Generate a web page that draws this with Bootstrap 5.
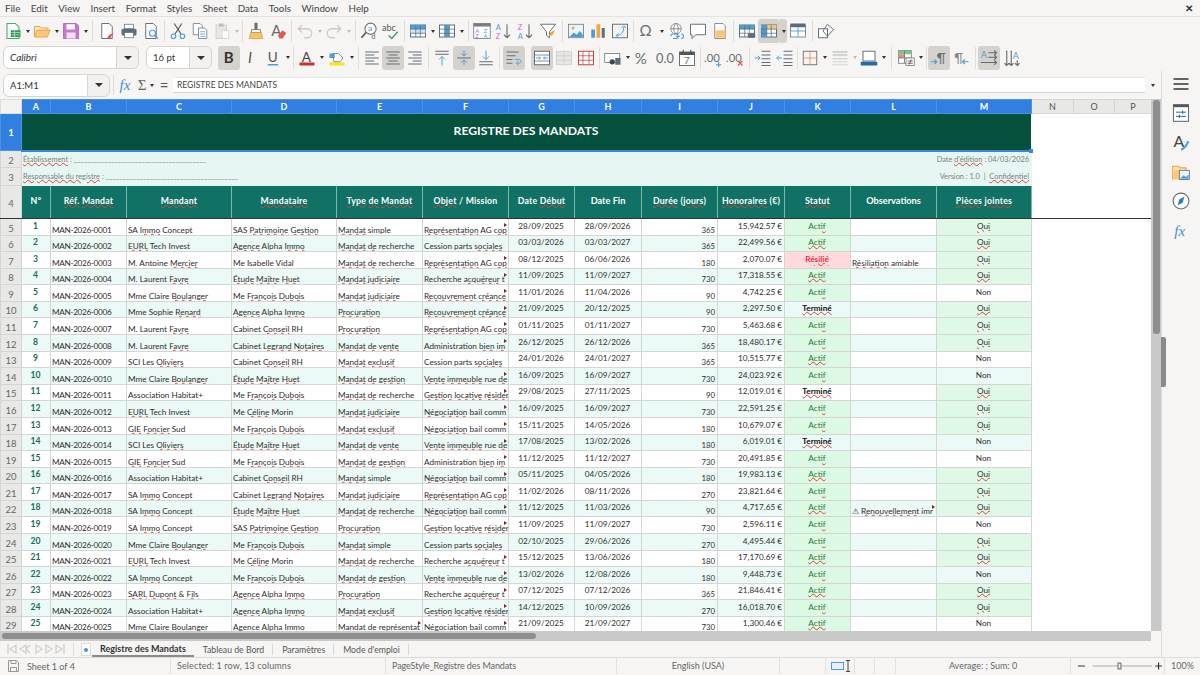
<!DOCTYPE html>
<html lang="fr">
<head>
<meta charset="UTF-8">
<title>Registre des Mandats</title>
<link href="https://cdn.jsdelivr.net/npm/bootstrap@5.3.0/dist/css/bootstrap.min.css" rel="stylesheet">
<style>
html, body { height: 675px; overflow: hidden; }
body { background: #f6f5f4; color: #3d3d3d; font-family: "Lato", "Noto Sans", sans-serif; font-size: 10px; }

/* menu + toolbars */
.menubar { height: 17px; border-bottom: 1px solid #e4e2df; font-size: 9.8px; padding-left: 5px; gap: 10.5px; line-height: 16px; color: #444; }
.menu-close { font-size: 10px; font-weight: 700; width: 22px; text-align: center; color: #333; }
.tbar { height: 27px; }
.tbar-a { padding-left: 2px; padding-top: 1px; }
.tbar-b { padding-left: 3px; }
.tbtn { width: 22px; height: 24px; padding: 0; border: 0; border-radius: 3px; flex: none; display: flex; align-items: center; justify-content: center; }
.tbtn svg { width: 18px; height: 18px; display: block; }
.tbtn.on { background: #d5d2ce; }
.tcar { width: 7px; height: 24px; flex: none; display: flex; align-items: center; justify-content: center; }
.tcar::after { content: ""; border-left: 2.5px solid transparent; border-right: 2.5px solid transparent; border-top: 3px solid #333; }
.tcar.off::after { border-top-color: #bbb; }
.tcar.on { background: #d5d2ce; border-radius: 0 3px 3px 0; }
.tsep { flex: none; display: flex; justify-content: center; }
.tsep::after { content: ""; width: 1px; height: 22px; background: #e0dedb; }
.combo { height: 23px; flex-wrap: nowrap; flex: none; }
.combo .form-control { font-size: 9.5px; padding: 0 6px; line-height: 21px; min-height: 0; height: 23px; border-color: #d8d5d1; color: #333; }
.combo .btn { background: #f2f1ef; border: 1px solid #d8d5d1; padding: 0; width: 23px; display: flex; align-items: center; justify-content: center; }
.combo .btn::after { content: ""; border-left: 4px solid transparent; border-right: 4px solid transparent; border-top: 4px solid #333; }
.combo-font { width: 136px; margin-right: 7px; font-style: italic; }
.combo-font .form-control { font-size: 10px; }
.combo-size { width: 66px; margin-right: 6px; }
.combo-name { width: 107px; }

/* formula bar */
.fbar { height: 28px; padding-left: 3px; }
.fsep { width: 1px; height: 20px; background: #dedcd9; margin: 0 0 0 3px; flex: none; }
.finput { width: 972px; height: 16px; background: #fff; border-bottom: 1px solid #d4d2cf; border-top: 1px solid #e8e6e3; font-size: 8.5px; line-height: 14px; padding-left: 4px; color: #444; flex: none; }
.fx-glyph { font-family: "Liberation Serif", serif; font-style: italic; color: #3f8fd0; font-size: 15px; width: 22px; text-align: center; line-height: 20px; flex: none; }
.sum-glyph { font-family: "Liberation Serif", serif; color: #666; font-size: 15px; width: 12px; text-align: center; line-height: 20px; flex: none; }
.eq-glyph { font-size: 15px; color: #555; width: 18px; text-align: center; line-height: 20px; flex: none; }

/* sheet */
.workarea { height: 586px; }
.leftcol { width: 1162px; flex: none; border-right: 1px solid #dedcd9; }
.sheet-row { height: 532px; }
.sheet-wrap { width: 1151px; height: 532px; overflow: hidden; background: #fff; flex: none; }
.table.sheet { width: 1151px; table-layout: fixed; border-collapse: collapse; margin: 0; font-size: 8.2px; line-height: 10px; --bs-table-border-color: #d3d6d5; --bs-table-bg: #fff; }
.table.sheet td, .table.sheet th { padding: 0 2px 0 1px; white-space: nowrap; overflow: hidden; position: relative; color: #2e2e2e; border: 1px solid var(--bs-table-border-color); font-weight: 400; }
.hr-cols { height: 14px; }
.hr-title { height: 37px; }
.hr-info { height: 17px; }
.hr-info2 { height: 18px; }
.hr-head { height: 33px; }
.table.sheet .hc { background: #e8e8e6; color: #555; text-align: center; font-size: 9px; border-color: #d5d5d3; padding: 0; vertical-align: middle; }
.table.sheet .hc.sel { background: #317fe0; color: #fff; font-weight: 700; border-color: #4f90e2; }
.table.sheet .corner { background: #f3f3f1; border-color: #ddd; }
.table.sheet .rh { background: #e8e8e6; color: #666; text-align: center; font-size: 9.5px; vertical-align: middle; padding: 3px 0 0; border-color: #d5d5d3; }
.table.sheet .rh.sel { background: #317fe0; color: #fff; font-weight: 700; border-color: #4f90e2; padding-top: 1px; }
.table.sheet .blank { border-color: #fff; background: #fff; }
.table.sheet td.title { background: #05513e; color: #fff; font-size: 12.2px; font-weight: 700; text-align: center; vertical-align: middle; border: 1px solid #fff; border-bottom: 2px solid #3d85dc; overflow: visible; padding-bottom: 1px; }
.handle { position: absolute; right: -2px; bottom: -3px; width: 4px; height: 4px; background: #3d85dc; z-index: 2; }
.table.sheet td.info { background: #e6f7f3; color: #7b7f7e; font-size: 7.4px; vertical-align: middle; border-color: #e6f7f3; padding-top: 1px; }
.table.sheet th.ch { background: #0f7265; font-size: 8.7px; font-weight: 700; letter-spacing: .25px; text-align: center; vertical-align: middle; border: 1px solid #7fb6ae; padding: 0 0 2px; color: #fff; border-bottom: 0; }
.table.sheet th.big { font-size: 9.2px; letter-spacing: 0; }
.table.sheet tr.head-row td, .table.sheet tr.head-row th { border-bottom: 1.5px solid #333; }
.table.sheet tr.tint td.cell { background: #ebfaf6; }
.table.sheet td.low { vertical-align: bottom; padding-bottom: 0; }
.table.sheet td.mid { vertical-align: middle; padding-bottom: 3px; text-align: center; }
.table.sheet td.ref { letter-spacing: -.32px; }
.table.sheet td.num { color: #1a6b5d; font-weight: 700; font-size: 8.6px; }
.table.sheet td.dur { text-align: right; font-size: 7.8px; }
.table.sheet td.fee { text-align: right; }
.table.sheet td.st-on, .table.sheet tr.tint td.st-on { background: #dcf9e3; color: #1e7a3e; }
.table.sheet td.st-bad, .table.sheet tr.tint td.st-bad { background: #ffd9dc; color: #e0333c; font-weight: 700; }
.table.sheet td.st-end { color: #111; font-weight: 700; }
.table.sheet td.yes, .table.sheet tr.tint td.yes { background: #dff9e6; }
.sp { text-decoration: underline wavy #e2403c; text-decoration-thickness: 1px; text-underline-offset: 0; }
.more::after { content: ""; position: absolute; right: 1px; top: 4px; border-left: 3px solid #8a2020; border-top: 2px solid transparent; border-bottom: 2px solid transparent; }

/* scrollbars */
.vscroll { width: 10px; background: #c9c9c9; flex: none; position: relative; }
.vthumb { position: absolute; left: 2px; right: 1px; top: 1px; height: 234px; background: #8e8e8e; border-radius: 3px; }
.hscroll { height: 10px; width: 1151px; background: #c9c9c9; position: relative; }
.hthumb { position: absolute; left: 2px; top: 2px; height: 6px; width: 534px; background: #8e8e8e; border-radius: 3px; }
.grip { position: absolute; left: 1161px; top: 266px; width: 5px; height: 50px; background: #8a8a8a; border-radius: 0 2px 2px 0; z-index: 3; }

/* tabs and status */
.tabbar { height: 16px; font-size: 9px; line-height: 14px; color: #555; }
.tabnav { width: 73px; flex: none; padding-left: 6px; }
.tabnav svg { width: 60px; height: 12px; display: block; }
.tabnew { width: 19px; flex: none; border-left: 1px solid #ddd; display: flex; justify-content: center; padding-left: 5px; }
.sheet-tab { padding: 0 8px; position: relative; flex: none; }
.sheet-tab.active { font-weight: 700; color: #333; border-bottom: 2px solid #8a8a8a; height: 15px; }
.sheet-tab.plain { border-right: 1px solid #d8d6d3; height: 11px; line-height: 11px; margin: 1px 0 0 9px; padding: 0 8px 0 0; font-size: 8.7px; }
.statusbar { height: 17px; border-top: 1px solid #dedcd9; font-size: 9px; color: #666; line-height: 15px; }
.stat { height: 16px; border-right: 1px solid #e3e1de; flex: none; white-space: nowrap; }
.stat-a { width: 171px; }
.stat-b { width: 215px; letter-spacing: .12px; padding-left: 6px; }
.stat-c { width: 231px; letter-spacing: -.1px; padding-left: 6px; }
.stat-d { width: 163px; }
.stat-e { width: 46px; }
.stat-f { width: 29px; }
.stat-g { width: 20px; }
.stat-h { width: 21px; }
.stat-i { width: 175px; }
.stat-j { width: 94px; }
.sidebar { width: 38px; flex: none; margin-top: -2px; }
.side-ico { width: 22px; height: 29.4px; display: flex; align-items: center; justify-content: center; }
.side-ico svg { width: 20px; height: 20px; }
</style>
</head>
<body>
<div class="d-flex menubar" id="menu"></div>
<div class="d-flex align-items-center tbar tbar-a" id="tb1"></div>
<div class="d-flex align-items-center tbar tbar-b" id="tb2"></div>

<div class="d-flex workarea">
  <div class="leftcol d-flex flex-column position-relative">
    <div class="d-flex align-items-center fbar">
      <div class="input-group combo combo-name">
        <div class="form-control">A1:M1</div>
        <button class="btn" type="button" aria-label="Zone"></button>
      </div>
      <div class="fsep"></div>
      <div class="fx-glyph">fx</div>
      <div class="sum-glyph">Σ</div>
      <div class="tcar"></div>
      <div class="eq-glyph">=</div>
      <div class="finput">REGISTRE DES MANDATS</div>
      <div class="tcar ms-1"></div>
    </div>
    <div class="d-flex sheet-row">
      <div class="sheet-wrap">
        <table class="table table-bordered sheet">
          <colgroup id="cols"></colgroup>
          <tbody id="grid"></tbody>
        </table>
      </div>
      <div class="vscroll"><div class="vthumb"></div></div>
    </div>
    <div class="grip"></div>
    <div class="hscroll"><div class="hthumb"></div></div>
    <div class="d-flex align-items-center tabbar">
      <div class="tabnav">
        <svg viewBox="0 0 60 12" fill="none" stroke="#d4d2cf" stroke-width="1.4"><path d="M2 1v10M10 2L4 6l6 4zM20 2l-6 4 6 4zM24 2l-4 4 4 4M30 2l6 4-6 4zM40 2l6 4-6 4zM50 2l6 4-6 4zM58 1v10"/></svg>
      </div>
      <div class="tabnew"><svg width="10" height="13" viewBox="0 0 10 13"><rect x=".5" y=".5" width="9" height="12" fill="#fff" stroke="#ddd"/><circle cx="5" cy="7" r="2" fill="#4b8fd6"/></svg></div>
      <div class="sheet-tab active">Registre des Mandats</div>
      <div class="sheet-tab plain">Tableau de Bord</div>
      <div class="sheet-tab plain">Paramètres</div>
      <div class="sheet-tab plain">Mode d'emploi</div>
    </div>
  </div>
  <div class="sidebar d-flex flex-column align-items-center" id="side"></div>
</div>

<div class="d-flex statusbar">
  <div class="stat stat-a d-flex align-items-center"><svg class="ms-2 me-2" width="11" height="12" viewBox="0 0 11 12" fill="none" stroke="#999"><path d="M.5.5h8l2 2v9H.5z"/><path d="M2.5 7.5h6v4h-6zM3 .5v3h5v-3"/></svg>Sheet 1 of 4</div>
  <div class="stat stat-b">Selected: 1 row, 13 columns</div>
  <div class="stat stat-c">PageStyle_Registre des Mandats</div>
  <div class="stat stat-d text-center">English (USA)</div>
  <div class="stat stat-e"></div>
  <div class="stat stat-f d-flex align-items-center"><svg width="26" height="14" viewBox="0 0 26 14" fill="none"><rect x="5.500" y="3.500" width="12" height="7" fill="#e8f1fa" stroke="#4b9fd6"/><path d="M20 1.500h4M22 1.500v11M20 12.500h4" stroke="#444"/></svg></div>
  <div class="stat stat-g"></div>
  <div class="stat stat-h"></div>
  <div class="stat stat-i text-center">Average: ; Sum: 0</div>
  <div class="stat stat-j d-flex align-items-center"><svg width="94" height="14" viewBox="0 0 94 14" fill="none" stroke="#666"><path d="M7 7h7M85 7h7M88.500 3.500v7" stroke="#333" stroke-width="1.200"/><path d="M22 7h60" stroke="#aaa"/><rect x="47.500" y="4" width="3" height="6" fill="#eee" stroke="#666"/></svg></div>
  <div class="flex-grow-1 text-center">100%</div>
</div>

<script>
// colours used over and over in the icons
const G = '#666e73', B = '#4b9fd6', L = '#c9c9c9';
const line = (d, c = G, w = 1.5) => `<path d="${d}" fill="none" stroke="${c}" stroke-width="${w}"/>`;
const doc = (c = G) => `<path d="M5 2h10l4 4v16H5z" fill="#fff" stroke="${c}" stroke-width="1.300"/>`;
const txt = (x, y, s, t, c = G, extra = '') => `<text x="${x}" y="${y}" font-size="${s}" fill="${c}" font-family="Lato, sans-serif" ${extra}>${t}</text>`;
const table = (stroke, head, extra = '') => `<rect x="2" y="4" width="20" height="16" fill="#fff" stroke="${stroke}" stroke-width="1.300"/>${head}${line('M2 9.500h20M2 15h20M9 4v16M15 4v16', stroke, 1)}${extra}`;
const lines = (arr, c = G) => line(arr.map(a => `M${a[0]} ${a[2]}H${a[1]}`).join(''), c, 1.400);

const ICONS = {
  new: `<path d="M4 2h11l5 5v15H4z" fill="#fff" stroke="#49a56e" stroke-width="1.400"/><rect x="9" y="11" width="13" height="9" fill="#2f9a5b"/>${line('M10 14h11M10 17h11M14 11v9', '#bfe6cc', 1)}`,
  open: `<path d="M2 20V6h7l2 2h9v3" fill="#fde3b8" stroke="#e5a64a" stroke-width="1.300"/><path d="M2 20l3-9h18l-4 9z" fill="#fbc878" stroke="#e5a64a" stroke-width="1.300"/>`,
  save: `<path d="M2 2h17l3 3v17H2z" fill="#c678cf" stroke="#a957b3"/><rect x="6" y="3" width="11" height="7" fill="#fff"/><rect x="6" y="14" width="12" height="8" fill="#f3dff5"/>`,
  pdf: `${doc()}<path d="M12 22c2-5 5-7 9-6-3 1-4 3-4 6z" fill="#e2574c"/>`,
  print: `<rect x="6" y="3" width="12" height="6" fill="#fff" stroke="${G}"/><rect x="2" y="9" width="20" height="9" rx="2" fill="#5f6d78"/><rect x="6" y="14" width="12" height="7" fill="#fff" stroke="${G}"/>`,
  preview: `${doc()}<circle cx="14" cy="15" r="4" fill="#fff" stroke="${B}" stroke-width="1.600"/>${line('M17 18l4 4', B, 2)}`,
  cut: `${line('M7 2l9 14M17 2L8 16', '#555', 1.500)}<circle cx="6" cy="19" r="3" fill="none" stroke="${B}" stroke-width="1.500"/><circle cx="18" cy="19" r="3" fill="none" stroke="${B}" stroke-width="1.500"/>`,
  copy: `<path d="M3 2h9l3 3v12H3z" fill="#fff" stroke="${G}"/><path d="M10 8h8l3 3v11H10z" fill="#fff" stroke="${G}"/>${line('M12 13h7M12 16h7M12 19h7', B, 1)}`,
  paste: `<rect x="4" y="4" width="14" height="18" fill="#e7e6e4" stroke="${L}"/><rect x="8" y="2" width="6" height="4" fill="#bbb"/><path d="M12 11h9v11h-9z" fill="#fff" stroke="${L}"/>`,
  clone: `<rect x="10" y="1" width="4" height="9" fill="#77695a"/><path d="M6 10h12v4H6z" fill="#fff" stroke="${G}"/><path d="M5 14h14l2 8H3z" fill="#f3c56b" stroke="#d1962e"/>`,
  clear: `${txt(3, 18, 20, 'A')}<path d="M12 18l6-7 5 4-5 7h-4z" fill="#e2574c"/>`,
  undo: line('M8 4L3 9l5 5M3 9h12a6 6 0 0 1 0 12h-4', L, 1.700),
  redo: line('M16 4l5 5-5 5M21 9H9a6 6 0 0 0 0 12h4', L, 1.700),
  find: `<circle cx="14" cy="9" r="7.500" fill="#fff" stroke="${G}" stroke-width="1.400"/>${txt(10.500, 12.500, 11, 'a', B)}${line('M8 14l-6 7', '#555', 2.200)}${txt(15, 23, 10, 'd')}`,
  spell: `${txt(0, 12, 12, 'abc', '#555')}${line('M9 18l4 4 8-9', '#3aa66a', 2)}`,
  rows: table('#5b6b7a', `<rect x="2" y="4" width="20" height="5.500" fill="${B}"/><rect x="2" y="9.500" width="20" height="5.500" fill="#cfe5f5"/>`),
  cols: table('#5b6b7a', `<rect x="9" y="4" width="6" height="16" fill="${B}"/>`),
  sortall: `<rect x="1" y="2" width="22" height="20" fill="#fff" stroke="${G}"/><rect x="1" y="2" width="22" height="4" fill="#7a7a7a"/>${txt(3, 14, 8, 'A', '#c668c9')}${txt(3, 21, 8, 'Z', '#c668c9')}${txt(14, 14, 8, 'Z', B)}${txt(14, 21, 8, 'A', B)}`,
  asc: `${txt(1, 11, 10, 'A', B)}${txt(1, 22, 10, 'Z', '#c668c9')}${line('M16 3v18M12 17l4 4 4-4')}`,
  desc: `${txt(1, 11, 10, 'Z', '#c668c9')}${txt(1, 22, 10, 'A', B)}${line('M16 3v18M12 17l4 4 4-4')}`,
  filter: `<path d="M2 3h20l-8 10v8l-4-3v-5z" fill="#fff" stroke="${G}" stroke-width="1.300"/><path d="M13 19c1-5 4-7 8-8-1 4-3 8-8 8z" fill="#f0a83c"/>`,
  image: `<rect x="2" y="3" width="20" height="18" fill="#eaf4fb" stroke="${G}"/><circle cx="8" cy="8" r="2" fill="#f0a83c"/><path d="M3 20l6-6 4 3 4-5 4 5v3z" fill="${B}"/>`,
  chart: `<rect x="3" y="10" width="5" height="11" fill="${B}"/><rect x="10" y="3" width="5" height="18" fill="#f0a83c"/><rect x="17" y="8" width="4" height="13" fill="#5f6d78"/>`,
  pivot: `<rect x="2" y="3" width="20" height="18" fill="#f3f3f1" stroke="${G}" stroke-width="1.300"/>${line('M7 18c6 0 10-4 10-11M14 8l3-3 3 3M10 15l-3 3 3 3', B, 1.300)}`,
  omega: txt(2, 19, 20, 'Ω'),
  link: `<circle cx="12" cy="9" r="7" fill="#fff" stroke="${G}"/>${line('M5 9h14M12 2c-4 4-4 10 0 14M12 2c4 4 4 10 0 14', G, 1)}${line('M5 19a3 3 0 0 1 3-3h4a3 3 0 0 1 0 6H8M12 19h5M19 16a3 3 0 0 1 0 6', B, 1.500)}`,
  comment: `<path d="M2 3h20v14H9l-5 5v-5H2z" fill="#fff" stroke="${G}" stroke-width="1.300"/>`,
  hdr: `<path d="M5 2h11l3 3v17H5z" fill="#fff" stroke="${G}"/><rect x="6" y="11" width="13" height="10" fill="#f6c67a"/>`,
  parea: `${table('#5b6b7a', `<rect x="2" y="4" width="20" height="5.500" fill="${B}"/>`)}<rect x="13" y="15" width="10" height="6" rx="2" fill="#5f6d78"/>`,
  freeze: `${table('#5b6b7a', `<rect x="2" y="4" width="20" height="5.500" fill="#f6c67a"/><rect x="2" y="4" width="7" height="16" fill="${B}"/>`)}`,
  split: `<rect x="2" y="4" width="20" height="16" fill="#fff" stroke="#5b6b7a"/><rect x="2" y="2" width="20" height="5" fill="#5b6b7a"/>${line('M2 12h20M12 7v13', B, 1.200)}`,
  shapes: `<rect x="2" y="9" width="12" height="12" fill="#fff" stroke="${G}" stroke-width="1.300"/><path d="M14 3l8 7-8 9-6-7z" fill="none" stroke="${G}" stroke-width="1.300"/>`,
  bold: txt(5, 19, 20, 'B', '#333', 'font-weight="700"'),
  italic: txt(8, 19, 20, 'I', '#555', 'font-style="italic" font-family="Liberation Serif"'),
  under: `${txt(5, 17, 18, 'U', '#555')}${line('M5 21h14', B, 2)}`,
  fcolor: `${txt(5, 17, 18, 'A', '#444')}<rect x="2" y="18" width="20" height="4" fill="#c9302c"/>`,
  hcolor: `<rect x="2" y="18" width="20" height="4" fill="#f4e81c"/><path d="M6 6h8l6 6-4 5H8z" fill="#fff" stroke="${G}"/><rect x="2" y="6" width="7" height="6" fill="${B}"/>`,
  alL: lines([[3,21,4],[3,15,8],[3,21,12],[3,15,16],[3,21,20]]),
  alC: lines([[3,21,4],[6,18,8],[3,21,12],[6,18,16],[3,21,20]]),
  alR: lines([[3,21,4],[9,21,8],[3,21,12],[9,21,16],[3,21,20]]),
  vT: `${lines([[3,21,3],[3,21,7]])}${line('M12 22V10M8 14l4-4 4 4', B, 1.300)}`,
  vC: `${lines([[3,21,12]])}${line('M12 2v7M8 6l4 3 4-3M12 22v-7M8 18l4-3 4 3', B, 1.300)}`,
  vB: `${lines([[3,21,17],[3,21,21]])}${line('M12 2v12M8 10l4 4 4-4', B, 1.300)}`,
  wrap: `${lines([[2,18,4],[2,14,9],[2,10,14],[2,10,19]])}${line('M13 14h6c3 0 3 5 0 5h-3M18 16l-3 3 3 3', B, 1.200)}`,
  merge: `<rect x="2" y="3" width="20" height="18" fill="#fff" stroke="#5b6b7a" stroke-width="1.300"/>${line('M2 8h20M2 16h20', '#5b6b7a', 1)}${line('M4 12h6M8 10l2 2-2 2M20 12h-6M16 10l-2 2 2 2', B, 1.300)}`,
  unmerge: `<rect x="2" y="3" width="20" height="18" fill="#e8e7e5" stroke="${L}"/>${line('M2 9h20M2 15h20M12 3v18', L, 1)}`,
  splitc: `<rect x="2" y="3" width="20" height="18" fill="#fff" stroke="#c9403c" stroke-width="1.300"/>${line('M2 9h20M2 15h20M8 3v18M16 3v18', '#c9403c', 1)}`,
  money: `<rect x="1" y="6" width="20" height="12" fill="#fff" stroke="${G}"/><circle cx="11" cy="17" r="3.500" fill="#444"/><rect x="15" y="12" width="7" height="9" fill="#5f6d78"/>`,
  percent: txt(1, 20, 20, '%'),
  number: txt(0, 19, 17, '0.0'),
  date: `<rect x="2" y="4" width="20" height="18" fill="#fff" stroke="${G}" stroke-width="1.300"/><rect x="2" y="4" width="20" height="4" fill="#555"/>${line('M7 1v5M17 1v5', '#555', 1.500)}${txt(8, 20, 13, '7')}`,
  adddec: `${txt(0, 17, 15, '.00')}${line('M16 21h7M19.500 17v7', B, 1.600)}`,
  deldec: `${txt(0, 17, 15, '.00')}${line('M16 16l6 6M22 16l-6 6', '#e2574c', 1.600)}`,
  indent: `${lines([[10,22,3],[10,22,8],[10,22,13],[10,22,18],[10,22,22]])}${line('M1 12h7M5 9l3 3-3 3', B, 1.300)}`,
  outdent: `${lines([[10,22,3],[10,22,8],[10,22,13],[10,22,18],[10,22,22]])}${line('M8 12H1M4 9l-3 3 3 3', B, 1.300)}`,
  borders: `<rect x="3" y="3" width="18" height="18" fill="none" stroke="${G}" stroke-width="1.200"/>${line('M3 12h18M12 3v18', '#d98a3c', 1)}`,
  bstyle: `${line('M2 4h20M2 8h20', L, 2)}${line('M2 13h20', L, 1.400)}${line('M2 17h20M2 21h20', L, 1)}`,
  bcolor: `<rect x="4" y="3" width="16" height="13" fill="#fff" stroke="${G}" stroke-width="1.300"/><rect x="1" y="17" width="22" height="5" fill="#2a69a8"/>`,
  cond: `<rect x="2" y="2" width="17" height="17" fill="#fff" stroke="${G}"/><rect x="2" y="2" width="17" height="5" fill="#7fc28e"/><rect x="2" y="7" width="8" height="5" fill="#e88d86"/>${line('M2 12h17M10 2v17', G, 1)}<rect x="12" y="12" width="11" height="10" fill="#fff" stroke="${G}"/>${line('M14 16h7M14 19h7M19 14l-3 7', '#444', 1)}`,
  ltr: `${txt(9, 18, 17, '¶')}${line('M1 17h8M6 14l3 3-3 3', B, 1.500)}`,
  rtl: `${txt(3, 18, 17, '¶', '#888')}${line('M22 17h-8M17 14l-3 3 3 3', B, 1.500)}`,
  horiz: `${txt(1, 12, 12, 'A', B)}${line('M11 5h11M19 2l3 3-3 3M11 11h11M19 8l3 3-3 3M1 18h21M19 15l3 3-3 3')}`,
  vert: `${txt(13, 13, 12, 'A', B)}${line('M5 2v20M2 19l3 3 3-3M11 2v20M8 19l3 3 3-3M19 15v7M16 19l3 3 3-3')}`,
  burger: line('M3 6h18M3 12h18M3 18h18', '#333', 2),
  props: `<rect x="3" y="2" width="18" height="20" fill="#fff" stroke="${G}" stroke-width="1.300"/><rect x="3" y="2" width="18" height="3" fill="#555"/>${line('M6 11h12M6 16h12M14 9v4M10 14v4', '#2a69a8', 1.200)}`,
  styles: `${txt(3, 18, 19, 'A', '#444')}${line('M12 21c3 0 5-2 9-10', B, 2.500)}`,
  gallery: `<path d="M2 21V5h7l2 2h7v3" fill="#fde3b8" stroke="#e5a64a" stroke-width="1.300"/><path d="M2 21l2-11h8v11z" fill="#fbc878"/><rect x="10" y="10" width="12" height="11" fill="#eaf4fb" stroke="${G}"/><path d="M11 20l4-4 3 2 3-3v5z" fill="${B}"/>`,
  nav: `<circle cx="12" cy="12" r="9.500" fill="#fff" stroke="${G}" stroke-width="1.300"/><path d="M16 7l-2 7-6 3 2-7z" fill="#2a7fc0"/>`,
  fx: `<text x="4" y="18" font-size="18" fill="#3f8fd0" font-family="Liberation Serif" font-style="italic">fx</text>`
};
const svg = n => `<svg viewBox="0 0 24 24" aria-hidden="true">${ICONS[n]}</svg>`;

// toolbar description: name, ^ caret, ^- dimmed caret, | separator:width, * pressed
function bar(id, spec) {
  const host = document.getElementById(id);
  spec.trim().split(/\s+/).forEach(tok => {
    if (tok.startsWith('|')) {
      host.insertAdjacentHTML('beforeend', `<div class="tsep" style="width:${tok.slice(1)}px"></div>`);
    } else if (tok === '^' || tok === '^-' || tok === '^*') {
      host.insertAdjacentHTML('beforeend', `<div class="tcar ${tok === '^-' ? 'off' : tok === '^*' ? 'on' : ''}"></div>`);
    } else if (tok.startsWith('_')) {
      host.insertAdjacentHTML('beforeend', `<div class="flex-none" style="margin-left:${tok.slice(1)}px"></div>`);
    } else {
      const on = tok.endsWith('*');
      host.insertAdjacentHTML('beforeend', `<button type="button" class="btn tbtn ${on ? 'on' : ''}">${svg(tok.replace('*', ''))}</button>`);
    }
  });
}

document.getElementById('menu').innerHTML =
  ['File','Edit','View','Insert','Format','Styles','Sheet','Data','Tools','Window','Help'].map(m => `<span>${m}</span>`).join('') +
  '<span class="ms-auto menu-close">✕</span>';

bar('tb1', `new ^ open ^ save ^ |7 pdf print preview |5 cut copy paste ^- |5 clone clear |5 undo ^- redo ^- |6 find spell |5
  rows ^ cols ^ |6 sortall asc desc filter |6 image chart pivot |5 omega ^ link comment hdr |5 parea freeze* ^* split |6 shapes`);

document.getElementById('tb2').innerHTML = `
  <div class="input-group combo combo-font"><div class="form-control">Calibri</div><button class="btn" type="button" aria-label="Police"></button></div>
  <div class="input-group combo combo-size"><div class="form-control">16 pt</div><button class="btn" type="button" aria-label="Taille"></button></div>`;
bar('tb2', `bold* italic under ^ |5 fcolor ^ _1 hcolor ^ |6 alL _-1 alC* alR |5 vT vC* vB |5 _1 wrap* _6 merge* unmerge splitc |5 money ^ _1 percent number date |4
  adddec deldec |6 indent outdent |3 borders ^ _1 bstyle ^- bcolor ^ |8 cond ^ |4 ltr* rtl |6 horiz* _1 vert`);

document.getElementById('side').innerHTML = ['burger','props','styles','gallery','nav','fx'].map(n => `<div class="side-ico">${svg(n)}</div>`).join('');

// sheet data
const widths = [21,29,76,105,105,86,86,66,67,76,67,66,86,95,42,41,37];
document.getElementById('cols').innerHTML = widths.map(w => `<col style="width:${w}px">`).join('');

const SA='SA Immo Concept', EU='EURL Tech Invest', LF='M. Laurent Favre', MC='Mme Claire Boulanger', AH='Association Habitat+', SC='SCI Les Oliviers', GF='GIE Foncier Sud';
const AG='Agence Alpha Immo', FD='Me François Dubois', HU='Étude Maître Huet', CC='Cabinet Conseil RH', CL='Cabinet Legrand Notaires', CM='Me Céline Morin', PG='SAS Patrimoine Gestion';
const MR='Mandat de recherche', MJ='Mandat judiciaire', MS='Mandat simple', PR='Procuration', MV='Mandat de vente', MX='Mandat exclusif', MG='Mandat de gestion', MP='Mandat de représentat';
// long texts stop where the cell cuts them on screen
const RE='Représentation AG cop', CE='Cession parts sociales', RA='Recherche acquéreur t', RC='Recouvrement créance', AD='Administration bien im', VI='Vente immeuble rue de', GL='Gestion locative résider', NB='Négociation bail comm', WA='⚠ Renouvellement imr';
const rows = [
 [SA,PG,MS,RE,'28/09/2025','28/09/2026',365,'15,942.57','Actif','', 'Oui'],
 [EU,AG,MR,CE,'03/03/2026','03/03/2027',365,'22,499.56','Actif','', 'Oui'],
 ['M. Antoine Mercier','Me Isabelle Vidal',MR,RE,'08/12/2025','06/06/2026',180,'2,070.07','Résilié','Résiliation amiable','Oui'],
 [LF,HU,MJ,RA,'11/09/2025','11/09/2027',730,'17,318.55','Actif','', 'Oui'],
 [MC,FD,MJ,RC,'11/01/2026','11/04/2026',90,'4,742.25','Actif','', 'Non'],
 ['Mme Sophie Renard',AG,PR,RC,'21/09/2025','20/12/2025',90,'2,297.50','Terminé','', 'Oui'],
 [LF,CC,PR,RE,'01/11/2025','01/11/2027',730,'5,463.68','Actif','', 'Oui'],
 [LF,CL,MV,AD,'26/12/2025','26/12/2026',365,'18,480.17','Actif','', 'Oui'],
 [SC,CC,MX,CE,'24/01/2026','24/01/2027',365,'10,515.77','Actif','', 'Non'],
 [MC,HU,MG,VI,'16/09/2025','16/09/2027',730,'24,023.92','Actif','', 'Non'],
 [AH,FD,MR,GL,'29/08/2025','27/11/2025',90,'12,019.01','Terminé','', 'Oui'],
 [EU,CM,MJ,NB,'16/09/2025','16/09/2027',730,'22,591.25','Actif','', 'Oui'],
 [GF,FD,MX,NB,'15/11/2025','14/05/2026',180,'10,679.07','Actif','', 'Oui'],
 [SC,HU,MV,VI,'17/08/2025','13/02/2026',180,'6,019.01','Terminé','', 'Non'],
 [GF,FD,MG,AD,'11/12/2025','11/12/2027',730,'20,491.85','Actif','', 'Non'],
 [AH,CC,MS,NB,'05/11/2025','04/05/2026',180,'19,983.13','Actif','', 'Oui'],
 [SA,CL,MJ,RE,'11/02/2026','08/11/2026',270,'23,821.64','Actif','', 'Oui'],
 [SA,HU,MR,NB,'11/12/2025','11/03/2026',90,'4,717.65','Actif',WA,'Oui'],
 [SA,PG,PR,GL,'11/09/2025','11/09/2027',730,'2,596.11','Actif','', 'Non'],
 [MC,FD,MS,CE,'02/10/2025','29/06/2026',270,'4,495.44','Actif','', 'Oui'],
 [EU,CM,MR,RA,'15/12/2025','13/06/2026',180,'17,170.69','Actif','', 'Oui'],
 [SA,FD,MG,VI,'13/02/2026','12/08/2026',180,'9,448.73','Actif','', 'Non'],
 ['SARL Dupont & Fils',AG,PR,RA,'07/12/2025','07/12/2026',365,'21,846.41','Actif','', 'Oui'],
 [AH,AG,MX,GL,'14/12/2025','10/09/2026',270,'16,018.70','Actif','', 'Oui'],
 [MC,AG,MP,NB,'21/09/2025','21/09/2027',730,'1,300.46','Actif','', 'Non']
];

// words the spell checker flags in the reference
const FLAGGED = new Set(('Immo Patrimoine Gestion EURL Agence Mercier Favre Boulanger Renard Étude Maître Huet François Dubois Céline Conseil Legrand Notaires Oliviers GIE Foncier SARL Dupont Fils ' +
  'Mandat de vente gestion exclusif judiciaire Procuration représentat sociales Représentation cop acquéreur Recouvrement créance bien im Vente immeuble locative résider Négociation ' +
  'Actif Résilié Terminé Oui Résiliation Renouvellement Établissement Réf. Mandant Mandataire Type Objet Début Durée (jours) Honoraires Statut Pièces jointes').split(' '));
const esc = s => s.replace(/&/g, '&amp;');
const sp = s => esc(s).split(' ').map(w => FLAGGED.has(w) ? `<span class="sp">${w}</span>` : w).join(' ');

const letters = 'ABCDEFGHIJKLM'.split('');
let html = '<tr class="hr-cols"><th class="hc corner"></th>' +
  letters.map(l => `<th class="hc sel">${l}</th>`).join('') +
  ['N','O','P'].map(l => `<th class="hc">${l}</th>`).join('') + '</tr>';

const blanks = '<td class="blank"></td><td class="blank"></td><td class="blank"></td>';
const rule = '_'.repeat(39);
html += `<tr class="hr-title"><td class="rh sel">1</td><td class="title" colspan="13">REGISTRE DES MANDATS<span class="handle"></span></td>${blanks}</tr>`;
html += `<tr class="hr-info"><td class="rh">2</td><td class="info" colspan="6">${sp('Établissement')} : ${rule}</td><td class="info text-end" colspan="7">Date <span class="sp">d'édition</span> : 04/03/2026</td>${blanks}</tr>`;
html += `<tr class="hr-info2"><td class="rh">3</td><td class="info" colspan="6"><span class="sp">Responsable du registre</span> : ${rule}</td><td class="info text-end" colspan="7">Version : 1.0 &nbsp;|&nbsp; <span class="sp">Confidentiel</span></td>${blanks}</tr>`;

const heads = ['N°','Réf. Mandat','Mandant','Mandataire','Type de Mandat','Objet / Mission','Date Début','Date Fin','Durée (jours)','Honoraires (€)','Statut','Observations','Pièces jointes'];
const bigHeads = new Set(['Date Fin','Observations']);
html += `<tr class="head-row hr-head"><td class="rh">4</td>` +
  heads.map(h => `<th class="ch ${bigHeads.has(h) ? 'big' : ''}">${bigHeads.has(h) ? h : sp(h)}</th>`).join('') + blanks + '</tr>';

const RH = 16.58;
const clipped = new Set([RE, RA, RC, AD, VI, GL, NB, MP, WA]);
rows.forEach((r, i) => {
  const h = Math.round((i + 1) * RH) - Math.round(i * RH);
  const cls = r[8] === 'Actif' ? 'st-on' : r[8] === 'Résilié' ? 'st-bad' : 'st-end';
  const leftCell = v => `<td class="cell low ${clipped.has(v) ? 'more' : ''}">${sp(v)}</td>`;
  html += `<tr class="${i % 2 ? 'tint' : ''}" style="height:${h}px">
    <td class="rh">${i + 5}</td>
    <td class="cell mid num">${i + 1}</td>
    <td class="cell low ref">MAN-2026-${String(i + 1).padStart(4, '0')}</td>
    ${leftCell(r[0])}${leftCell(r[1])}${leftCell(r[2])}${leftCell(r[3])}
    <td class="cell mid">${r[4]}</td><td class="cell mid">${r[5]}</td>
    <td class="cell low dur">${r[6]}</td>
    <td class="cell mid fee">${r[7]} €</td>
    <td class="cell mid ${cls}">${sp(r[8])}</td>
    ${leftCell(r[9])}
    <td class="cell mid ${r[10] === 'Oui' ? 'yes' : ''}">${sp(r[10])}</td>
    ${blanks}</tr>`;
});
document.getElementById('grid').innerHTML = html;
</script>
<script src="https://cdn.jsdelivr.net/npm/bootstrap@5.3.0/dist/js/bootstrap.bundle.min.js"></script>
</body>
</html>
